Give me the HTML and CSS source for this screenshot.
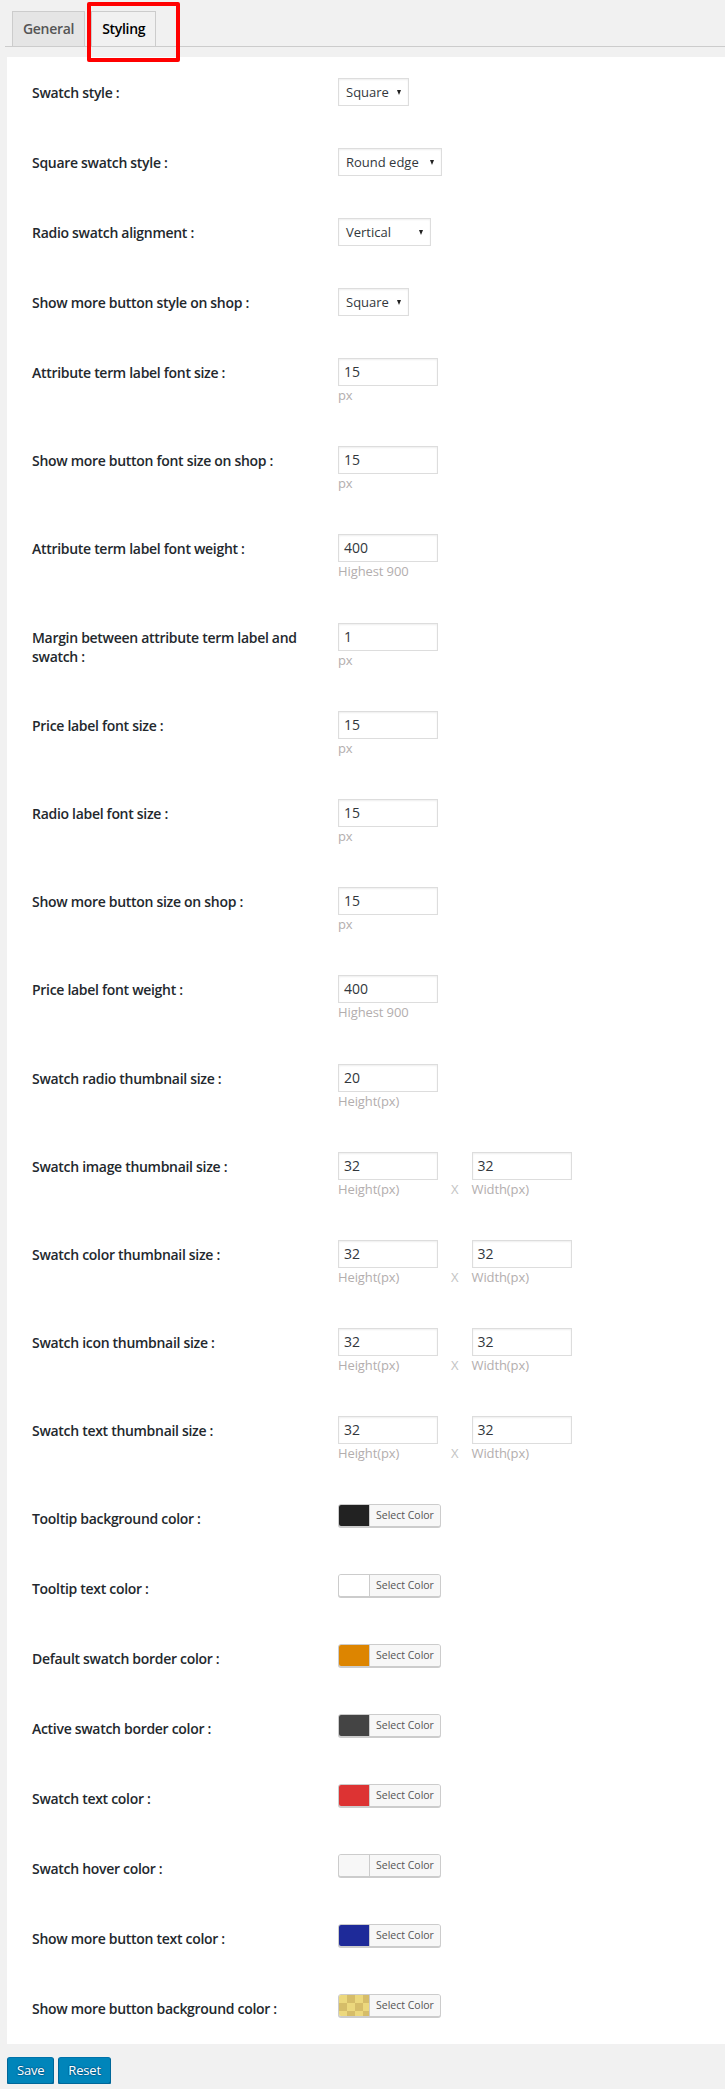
FILE: index.html
```html
<!DOCTYPE html>
<html lang="en">
<head>
<meta charset="utf-8">
<title>Swatch settings - Styling</title>
<link rel="stylesheet" href="styles.css">
</head>
<body>
<div class="page">
  <nav class="tabs">
    <a class="tab">General</a>
    <a class="tab tab-active">Styling</a>
    <span class="highlight"></span>
  </nav>

  <form class="panel">
    <div class="row">
      <div class="label">Swatch style :</div>
      <div class="field"><div class="select w70"><span>Square</span><i class="caret"></i></div></div>
    </div>
    <div class="row">
      <div class="label">Square swatch style :</div>
      <div class="field"><div class="select w104"><span>Round edge</span><i class="caret"></i></div></div>
    </div>
    <div class="row">
      <div class="label">Radio swatch alignment :</div>
      <div class="field"><div class="select w93"><span>Vertical</span><i class="caret"></i></div></div>
    </div>
    <div class="row">
      <div class="label">Show more button style on shop :</div>
      <div class="field"><div class="select w70"><span>Square</span><i class="caret"></i></div></div>
    </div>

    <div class="row tall">
      <div class="label">Attribute term label font size :</div>
      <div class="field"><div class="input">15</div><div class="hint">px</div></div>
    </div>
    <div class="row tall">
      <div class="label">Show more button font size on shop :</div>
      <div class="field"><div class="input">15</div><div class="hint">px</div></div>
    </div>
    <div class="row tall">
      <div class="label">Attribute term label font weight :</div>
      <div class="field"><div class="input">400</div><div class="hint">Highest 900</div></div>
    </div>
    <div class="row tall">
      <div class="label">Margin between attribute term label and swatch :</div>
      <div class="field"><div class="input">1</div><div class="hint">px</div></div>
    </div>
    <div class="row tall">
      <div class="label">Price label font size :</div>
      <div class="field"><div class="input">15</div><div class="hint">px</div></div>
    </div>
    <div class="row tall">
      <div class="label">Radio label font size :</div>
      <div class="field"><div class="input">15</div><div class="hint">px</div></div>
    </div>
    <div class="row tall">
      <div class="label">Show more button size on shop :</div>
      <div class="field"><div class="input">15</div><div class="hint">px</div></div>
    </div>
    <div class="row tall">
      <div class="label">Price label font weight :</div>
      <div class="field"><div class="input">400</div><div class="hint">Highest 900</div></div>
    </div>
    <div class="row tall">
      <div class="label">Swatch radio thumbnail size :</div>
      <div class="field"><div class="input">20</div><div class="hint">Height(px)</div></div>
    </div>
    <div class="row tall">
      <div class="label">Swatch image thumbnail size :</div>
      <div class="field pair">
        <div class="cell"><div class="input">32</div><div class="hint">Height(px)</div></div>
        <span class="times">X</span>
        <div class="cell"><div class="input">32</div><div class="hint">Width(px)</div></div>
      </div>
    </div>
    <div class="row tall">
      <div class="label">Swatch color thumbnail size :</div>
      <div class="field pair">
        <div class="cell"><div class="input">32</div><div class="hint">Height(px)</div></div>
        <span class="times">X</span>
        <div class="cell"><div class="input">32</div><div class="hint">Width(px)</div></div>
      </div>
    </div>
    <div class="row tall">
      <div class="label">Swatch icon thumbnail size :</div>
      <div class="field pair">
        <div class="cell"><div class="input">32</div><div class="hint">Height(px)</div></div>
        <span class="times">X</span>
        <div class="cell"><div class="input">32</div><div class="hint">Width(px)</div></div>
      </div>
    </div>
    <div class="row tall">
      <div class="label">Swatch text thumbnail size :</div>
      <div class="field pair">
        <div class="cell"><div class="input">32</div><div class="hint">Height(px)</div></div>
        <span class="times">X</span>
        <div class="cell"><div class="input">32</div><div class="hint">Width(px)</div></div>
      </div>
    </div>

    <div class="row">
      <div class="label">Tooltip background color :</div>
      <div class="field"><div class="color-btn"><span class="swatch sw-dark"></span><span class="color-text">Select Color</span></div></div>
    </div>
    <div class="row">
      <div class="label">Tooltip text color :</div>
      <div class="field"><div class="color-btn"><span class="swatch sw-white"></span><span class="color-text">Select Color</span></div></div>
    </div>
    <div class="row">
      <div class="label">Default swatch border color :</div>
      <div class="field"><div class="color-btn"><span class="swatch sw-orange"></span><span class="color-text">Select Color</span></div></div>
    </div>
    <div class="row">
      <div class="label">Active swatch border color :</div>
      <div class="field"><div class="color-btn"><span class="swatch sw-gray"></span><span class="color-text">Select Color</span></div></div>
    </div>
    <div class="row">
      <div class="label">Swatch text color :</div>
      <div class="field"><div class="color-btn"><span class="swatch sw-red"></span><span class="color-text">Select Color</span></div></div>
    </div>
    <div class="row">
      <div class="label">Swatch hover color :</div>
      <div class="field"><div class="color-btn"><span class="swatch sw-light"></span><span class="color-text">Select Color</span></div></div>
    </div>
    <div class="row">
      <div class="label">Show more button text color :</div>
      <div class="field"><div class="color-btn"><span class="swatch sw-blue"></span><span class="color-text">Select Color</span></div></div>
    </div>
    <div class="row">
      <div class="label">Show more button background color :</div>
      <div class="field"><div class="color-btn"><span class="swatch sw-check"></span><span class="color-text">Select Color</span></div></div>
    </div>
  </form>

  <div class="actions">
    <button class="btn" type="button">Save</button>
    <button class="btn" type="button">Reset</button>
  </div>
</div>
</body>
</html>
```

FILE: styles.css
```css
html, body {
  margin: 0;
  padding: 0;
}

body {
  background: #f1f1f1;
  font-family: "Open Sans", "Noto Sans", sans-serif;
  color: #23282d;
  font-size: 14px;
}

.page {
  width: 725px;
}

/* Tabs */
.tabs {
  position: relative;
  display: flex;
  align-items: flex-end;
  margin-left: 5px;
  padding: 11px 0 0 7px;
  border-bottom: 1px solid #ccc;
  height: 35px;
}

.tab {
  display: block;
  box-sizing: border-box;
  height: 35px;
  padding: 5px 10px;
  margin-right: 6px;
  border: 1px solid #ccc;
  border-bottom: none;
  background: #e5e5e5;
  color: #555;
  font-size: 14px;
  font-weight: 600;
  line-height: 24px;
  letter-spacing: -0.3px;
  text-decoration: none;
}

.tab-active {
  background: #f1f1f1;
  color: #000;
}

.highlight {
  position: absolute;
  left: 82px;
  top: 2px;
  width: 93px;
  height: 60px;
  box-sizing: border-box;
  border: 4px solid #ff0000;
  border-radius: 2px;
}

/* Panel */
.panel {
  margin: 10px 0 0 7px;
  background: #fff;
  padding: 6px 0 0 25px;
}

.row {
  display: grid;
  grid-template-columns: 306px 1fr;
  height: 70px;
}

.row.tall {
  height: 88.2px;
}

.row:last-child {
  height: 65px;
}

.label {
  padding: 20px 10px 0 0;
  font-size: 14px;
  font-weight: 600;
  line-height: 19px;
  letter-spacing: -0.3px;
  color: #23282d;
}

.field {
  padding-top: 15px;
}

/* Select */
.select {
  box-sizing: border-box;
  height: 28px;
  display: flex;
  align-items: center;
  justify-content: space-between;
  padding: 0 7px 0 7px;
  border: 1px solid #ddd;
  box-shadow: inset 0 1px 2px rgba(0, 0, 0, 0.07);
  background: #fff;
  color: #32373c;
  font-size: 13px;
}

.w70 { width: 71px; }
.w104 { width: 104px; }
.w93 { width: 93px; }

.caret {
  width: 0;
  height: 0;
  border-left: 2.5px solid transparent;
  border-right: 2.5px solid transparent;
  border-top: 5px solid #222;
}

/* Text input */
.input {
  box-sizing: border-box;
  width: 100px;
  height: 28px;
  padding: 0 5px;
  border: 1px solid #ddd;
  box-shadow: inset 0 1px 2px rgba(0, 0, 0, 0.07);
  background: #fff;
  color: #32373c;
  font-size: 14px;
  line-height: 26px;
}

.hint {
  font-size: 13px;
  line-height: 18px;
  letter-spacing: -0.1px;
  color: #b3aeae;
}

.pair {
  display: flex;
  align-items: flex-start;
}

.times {
  margin: 28px 13px 0 13px;
  font-size: 13px;
  line-height: 18px;
  color: #c4c4c4;
}

/* Color picker button */
.color-btn {
  box-sizing: border-box;
  display: inline-flex;
  height: 23px;
  border: 1px solid #ccc;
  border-radius: 3px;
  box-shadow: 0 1px 0 #ccc;
  overflow: hidden;
  background: #f7f7f7;
}

.swatch {
  display: block;
  width: 30px;
  height: 100%;
}

.sw-dark { background: #222222; }
.sw-white { background: #ffffff; }
.sw-orange { background: #dd8500; }
.sw-gray { background: #444444; }
.sw-red { background: #dd3333; }
.sw-light { background: #f7f7f7; }
.sw-blue { background: #1e2a99; }
.sw-check {
  background: repeating-conic-gradient(#d6bd69 0 25%, #ecd87d 0 50%) 0 0 / 16px 16px;
}

.color-text {
  display: block;
  padding: 0 6px;
  border-left: 1px solid #ccc;
  background: #f7f7f7;
  color: #555;
  font-size: 10.5px;
  line-height: 21px;
}

/* Actions */
.actions {
  display: flex;
  gap: 4px;
  margin-top: 13px;
  padding-left: 7px;
}

.btn {
  box-sizing: border-box;
  height: 27px;
  padding: 0 9px 1px;
  border: 1px solid #0073aa;
  border-color: #0073aa #006799 #006799;
  border-radius: 3px;
  background: #0085ba;
  box-shadow: 0 1px 0 #006799;
  color: #fff;
  font-family: "Open Sans", "Noto Sans", sans-serif;
  font-size: 13px;
  line-height: 24px;
  letter-spacing: -0.2px;
  text-shadow: 0 -1px 1px #006799, 1px 0 1px #006799, 0 1px 1px #006799, -1px 0 1px #006799;
}
```
